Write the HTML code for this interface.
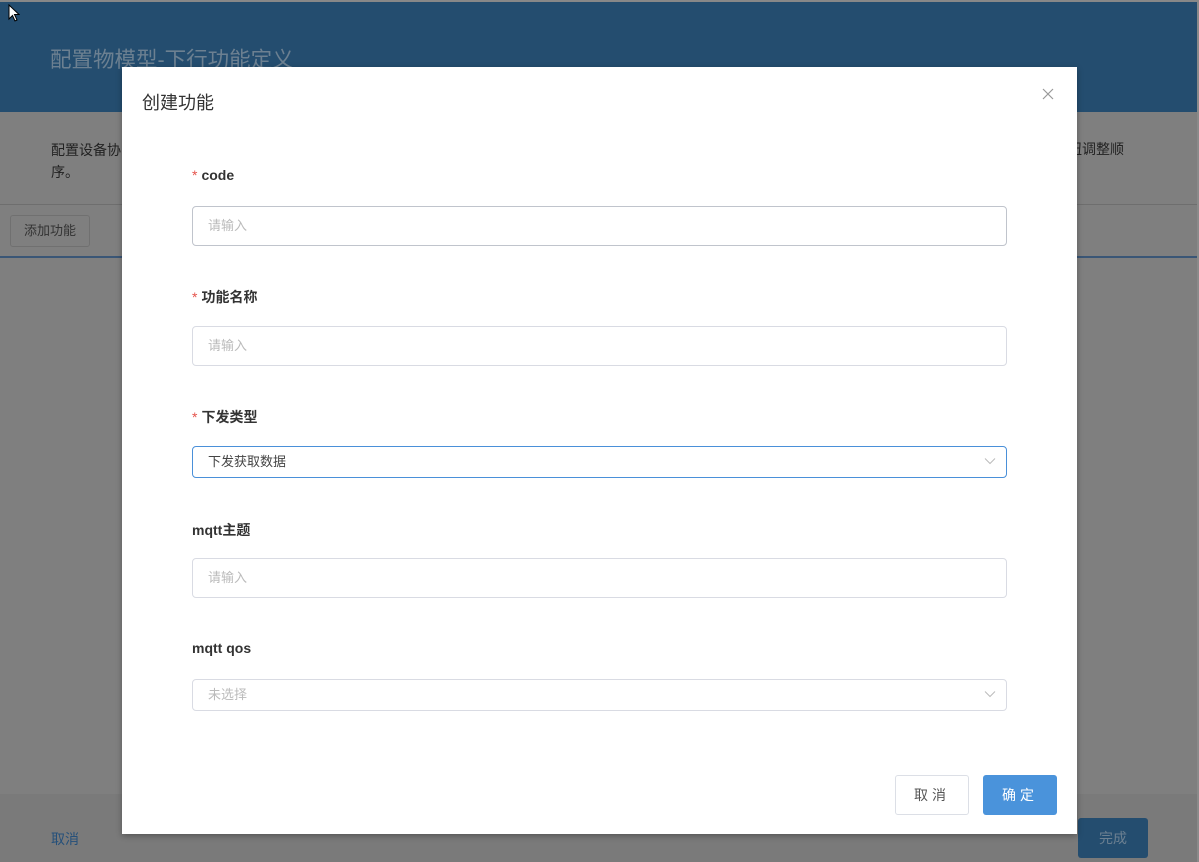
<!DOCTYPE html>
<html><head><meta charset="utf-8"><style>
*{box-sizing:border-box;margin:0;padding:0}
body{width:1199px;height:862px;position:relative;overflow:hidden;font-family:"Liberation Sans","Noto Sans CJK SC",sans-serif;background:#7f7f7f}
.hdr{position:absolute;left:0;top:0;width:1197px;height:112px;background:#244d6f;border-top:2px solid #888}
.hdr h1{position:absolute;left:50px;top:41px;font-size:21.5px;font-weight:normal;color:#6c8091}
.desc{position:absolute;left:51px;top:139px;font-size:14px;line-height:22px;color:#222}
.desc2{position:absolute;left:1068px;top:139px;font-size:14px;color:#222}
.l1{position:absolute;left:0;top:204px;width:1197px;height:1px;background:#6e6e6e}
.l2{position:absolute;left:0;top:256px;width:1197px;height:2px;background:#3a5676}
.add{position:absolute;left:10px;top:215px;width:80px;height:32px;border:1px solid #707070;border-radius:3px;font-size:13px;color:#333;text-align:center;line-height:30px}
.foot{position:absolute;left:0;top:794px;width:1197px;height:68px;background:#7a7a7a}
.fc{position:absolute;left:51px;top:829px;font-size:14px;color:#25507a}
.done{position:absolute;left:1078px;top:818px;width:70px;height:40px;background:#244d6f;border-radius:3px;color:#6c8091;font-size:14px;text-align:center;line-height:40px}
.rb{position:absolute;left:1197px;top:0;width:2px;height:862px;background:#8a8a8a}
.dlg{position:absolute;left:122px;top:67px;width:955px;height:767px;background:#fff;box-shadow:0 2px 6px rgba(0,0,0,.3)}
.dlg h2{position:absolute;left:20px;top:22px;font-size:18px;font-weight:normal;color:#333}
.x{position:absolute;left:920px;top:21px}
.lb{position:absolute;left:70px;font-size:14px;font-weight:bold;color:#333}
.lb i{color:#e5534b;font-style:normal;font-weight:normal;margin-right:4px}
.in{position:absolute;left:70px;width:815px;height:40px;border:1px solid #d9dbe3;border-radius:4px;font-size:13px;color:#bbb;padding-left:15px;line-height:38px}
.sel{height:32px;line-height:30px}
.ch{position:absolute;right:10px;top:10px}
.btn{position:absolute;top:708px;width:74px;height:40px;border-radius:3px;font-size:14px;text-align:center;line-height:38px;letter-spacing:4px}
</style></head><body>
<div class="hdr"><h1>配置物模型-下行功能定义</h1></div>
<div class="desc">配置设备协<br>序。</div>
<div class="desc2">扭调整顺</div>
<div class="l1"></div>
<div class="add">添加功能</div>
<div class="l2"></div>
<div class="foot"></div>
<div class="fc">取消</div>
<div class="done">完成</div>
<div class="rb"></div>
<svg style="position:absolute;left:8px;top:4px" width="12" height="18" viewBox="0 0 12 18"><path d="M1 1 L1 15 L4.5 11.5 L7 17 L9 16 L6.5 10.5 L11 10.5 Z" fill="#fff" stroke="#000" stroke-width="1"/></svg>
<div class="dlg">
<h2>创建功能</h2>
<svg class="x" width="12" height="12" viewBox="0 0 12 12"><path d="M1 1L11 11M11 1L1 11" stroke="#999" stroke-width="1.2"/></svg>
<div class="lb" style="top:100px"><i>*</i>code</div>
<div class="in" style="top:139px;border-color:#c0c4cc">请输入</div>
<div class="lb" style="top:220px"><i>*</i>功能名称</div>
<div class="in" style="top:259px">请输入</div>
<div class="lb" style="top:340px"><i>*</i>下发类型</div>
<div class="in sel" style="top:379px;border-color:#4a90d9;color:#444">下发获取数据<svg class="ch" width="12" height="8" viewBox="0 0 12 8"><path d="M1 1.5L6 6.5L11 1.5" stroke="#bbb" fill="none"/></svg></div>
<div class="lb" style="top:453px">mqtt主题</div>
<div class="in" style="top:491px">请输入</div>
<div class="lb" style="top:573px">mqtt qos</div>
<div class="in sel" style="top:612px">未选择<svg class="ch" width="12" height="8" viewBox="0 0 12 8"><path d="M1 1.5L6 6.5L11 1.5" stroke="#bbb" fill="none"/></svg></div>
<div class="btn" style="left:773px;border:1px solid #dcdfe6;color:#555">取消</div>
<div class="btn" style="left:861px;background:#4a93db;color:#fff;line-height:40px">确定</div>
</div>
</body></html>
